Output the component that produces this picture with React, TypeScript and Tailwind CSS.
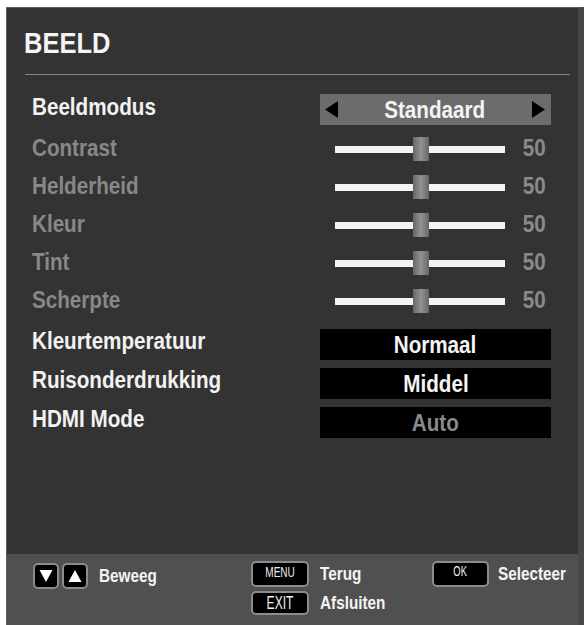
import React from 'react';

const sliders = ['Contrast', 'Helderheid', 'Kleur', 'Tint', 'Scherpte'];

const boxes = [
  { label: 'Kleurtemperatuur', value: 'Normaal', dim: false },
  { label: 'Ruisonderdrukking', value: 'Middel', dim: false },
  { label: 'HDMI Mode', value: 'Auto', dim: true },
];

function Triangle({ dir, className }: { dir: 'left' | 'right' | 'up' | 'down'; className: string }) {
  const points = {
    left: '13,0 13,17 0,8.5',
    right: '0,0 0,17 13,8.5',
    up: '6.5,0 13,12 0,12',
    down: '0,0 13,0 6.5,12',
  }[dir];
  const box = dir === 'left' || dir === 'right' ? '0 0 13 17' : '0 0 13 12';
  return (
    <svg viewBox={box} className={className}>
      <polygon points={points} fill="currentColor" />
    </svg>
  );
}

function Key({ children, className }: { children?: React.ReactNode; className: string }) {
  return (
    <div className={`flex shrink-0 justify-center rounded-[5px] border-2 border-[#8c8c8c] bg-black ${className}`}>
      {children}
    </div>
  );
}

export default function App() {
  return (
    <div className="h-[625px] w-[584px] overflow-hidden bg-white pl-[6px] pt-[7px] font-['Liberation_Sans',Arial,sans-serif] font-bold">
      <div className="flex h-[618px] flex-col border-l border-t border-[#5e5e5e] border-r-[6px] border-r-[#474747] bg-[#333333]">
        {/* menu body */}
        <div className="flex flex-1 flex-col">
          <div className="pl-[17px] pt-[20px]">
            <span className="inline-block origin-left scale-x-[0.85] text-[30px] leading-[30px] text-[#f4f4f4]">BEELD</span>
          </div>
          <div className="ml-[18px] mr-[8px] mt-[14px] h-px bg-[#858585]" />

          <div className="mt-[19px] flex flex-col pl-[25px] pr-[27px] text-[24px] leading-[24px]">
            <div className="flex h-[31px] items-center">
              <div className="flex-1 pb-[5px]">
                <span className="inline-block origin-left scale-x-[0.86] text-[#f2f2f2]">Beeldmodus</span>
              </div>
              <div className="flex h-full w-[231px] items-center bg-[#6c6c6c] pl-[5px] pr-[6px]">
                <Triangle dir="left" className="h-[17px] w-[13px] text-black" />
                <div className="flex flex-1 justify-center">
                  <span className="inline-block scale-x-[0.86] text-[#f4f4f4]">Standaard</span>
                </div>
                <Triangle dir="right" className="h-[17px] w-[13px] text-black" />
              </div>
            </div>

            <div className="mt-[5px] flex flex-col">
              {sliders.map((name) => (
                <div key={name} className="flex h-[38px] items-center">
                  <div className="flex-1 pb-[2px]">
                    <span className="inline-block origin-left scale-x-[0.86] text-[#888888]">{name}</span>
                  </div>
                  <div className="flex h-full w-[231px] items-center pl-[15px] pr-[5px]">
                    <div className="relative h-[7px] w-[170px] bg-[#f3f3f3]">
                      <div className="absolute left-[78px] top-1/2 h-[24px] w-[16px] -translate-y-1/2 bg-linear-to-r from-[#666666] via-[#939393] to-[#666666]" />
                    </div>
                    <span className="ml-auto inline-block origin-right scale-x-[0.86] pb-[2px] text-[#8a8a8a]">50</span>
                  </div>
                </div>
              ))}
            </div>

            <div className="mt-[9px] flex flex-col gap-[8px]">
              {boxes.map((b) => (
                <div key={b.label} className="flex h-[31px] items-center">
                  <div className="flex-1 pb-[7px]">
                    <span className="inline-block origin-left scale-x-[0.86] text-[#f2f2f2]">{b.label}</span>
                  </div>
                  <div className="flex h-full w-[231px] items-center justify-center bg-black">
                    <span className={`inline-block scale-x-[0.86] ${b.dim ? 'text-[#8a8a8a]' : 'text-[#f4f4f4]'}`}>{b.value}</span>
                  </div>
                </div>
              ))}
            </div>
          </div>
        </div>

        {/* help bar */}
        <div className="flex h-[71px] items-start bg-[#505050] pl-[26px] pt-[7px] text-[18px] leading-[20px] text-[#f4f4f4]">
          <div className="mt-[2px] flex w-[220px] items-center">
            <Key className="h-[26px] w-[26px] items-center">
              <Triangle dir="down" className="h-[12px] w-[14px] text-white" />
            </Key>
            <Key className="ml-[3px] h-[26px] w-[26px] items-center">
              <Triangle dir="up" className="h-[12px] w-[14px] text-white" />
            </Key>
            <span className="ml-[11px] inline-block origin-left scale-x-[0.85]">Beweeg</span>
          </div>

          <div className="flex w-[183px] flex-col gap-[4px]">
            <div className="flex items-center">
              <Key className="h-[26px] w-[58px] items-start pt-px">
                <span className="inline-block scale-x-[0.67] text-[15px] font-normal leading-[15px] text-[#eeeeee]">MENU</span>
              </Key>
              <span className="ml-[11px] inline-block origin-left scale-x-[0.85]">Terug</span>
            </div>
            <div className="flex items-center">
              <Key className="h-[24px] w-[58px] items-center">
                <span className="inline-block scale-x-[0.67] text-[18px] font-normal leading-[18px] text-[#eeeeee]">EXIT</span>
              </Key>
              <span className="ml-[11px] inline-block origin-left scale-x-[0.85]">Afsluiten</span>
            </div>
          </div>

          <div className="flex items-center">
            <Key className="h-[26px] w-[57px] items-start pt-px">
              <span className="inline-block scale-x-[0.67] text-[14px] font-normal leading-[15px] text-[#eeeeee]">OK</span>
            </Key>
            <span className="ml-[9px] inline-block origin-left scale-x-[0.85]">Selecteer</span>
          </div>
        </div>
      </div>
    </div>
  );
}
